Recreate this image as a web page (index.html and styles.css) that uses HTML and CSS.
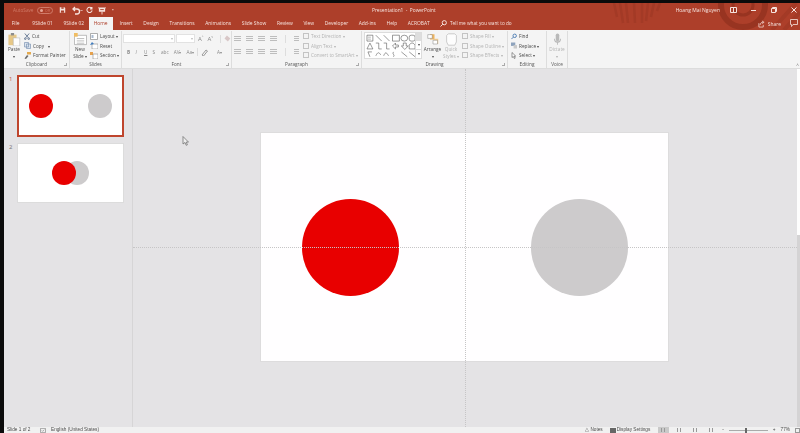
FILE: index.html
```html
<!DOCTYPE html>
<html lang="en">
<head>
    <meta charset="UTF-8">
    <title>Presentation1 - PowerPoint</title>
    <link rel="stylesheet" href="styles.css">
</head>
<body>
    <div class="app">
        <div class="chrome">
            <svg class="pattern" width="200" height="27" viewBox="0 0 200 27" fill="none" stroke="#a33a26">
                <path d="M14 0l3 14M20 0l3 20M26 0l2 20M34 0l1 20M42 0v20M48 0l-2 18M54 0l-3 14M60 0l-3 8" stroke-width="2.5"/>
                <circle cx="143" cy="2" r="22" stroke="#983421" stroke-width="6"/>
                <circle cx="143" cy="2" r="10" stroke="#983421" stroke-width="3"/>
                <path d="M172 27l24-27M184 27l16-18" stroke-width="4"/>
            </svg>

            <div class="titlebar">
                <div class="qat">
                    <span class="autosave">AutoSave</span>
                    <span class="toggle"><i></i>Off</span>
                    <svg class="qat-save" width="7" height="8" viewBox="0 0 9 9"><path d="M1 1h6l1 1v6H1z" fill="#f6e3de"/><path d="M3 1h3v2H3zM2.5 5h4v3h-4z" fill="#a93f2a"/></svg>
                    <svg class="qat-undo" width="11" height="9" viewBox="0 0 11 9" fill="none" stroke="#f6e3de" stroke-width="1.3"><path d="M3 1L1 3l2 2M1 3h4a2.5 2.5 0 0 1 0 5H3"/><path d="M8.5 4l1 1 1-1" stroke-width=".8"/></svg>
                    <svg class="qat-redo" width="7" height="8" viewBox="0 0 8 8" fill="none" stroke="#f6e3de" stroke-width="1.2"><path d="M6.5 2.200A3 3 0 1 0 7 4.500M6.800.5v2.200H4.600"/></svg>
                    <svg class="qat-slide" width="8" height="9" viewBox="0 0 9 9"><path d="M0 1h9v1H0zM1 2h7v4H1z" fill="#f6e3de"/><path d="M4 6h1v3H4z" fill="#f6e3de"/><path d="M2.5 3h4v1h-4z" fill="#a93f2a"/></svg>
                    <span class="qat-more">&#8226;</span>
                </div>
                <div class="doc-title">Presentation1 &nbsp;-&nbsp; PowerPoint</div>
                <div class="window-controls">
                    <span class="user">Hoang Mai Nguyen</span>
                    <svg width="7" height="6" viewBox="0 0 7 6" fill="none" stroke="#f6e3de"><path d="M.5.5h6v5h-6zM3.5.5v5"/></svg>
                    <span class="ctl-min"></span>
                    <svg width="6" height="6" viewBox="0 0 6 6" fill="none" stroke="#f6e3de"><path d="M.5 1.500h4v4h-4zM1.500 1.500v-1h4v4h-1"/></svg>
                    <svg width="6" height="6" viewBox="0 0 6 6" fill="none" stroke="#f6e3de"><path d="M.5.5l5 5M5.500.5l-5 5"/></svg>
                </div>
            </div>

            <div class="tabbar">
                <nav class="tabs">
                    <span class="tab tab-file">File</span>
                    <span class="tab">9Slide 01</span>
                    <span class="tab tab-slide2">9Slide 02</span>
                    <span class="tab tab-active">Home</span>
                    <span class="tab tab-insert">Insert</span>
                    <span class="tab">Design</span>
                    <span class="tab">Transitions</span>
                    <span class="tab">Animations</span>
                    <span class="tab">Slide Show</span>
                    <span class="tab">Review</span>
                    <span class="tab">View</span>
                    <span class="tab">Developer</span>
                    <span class="tab">Add-ins</span>
                    <span class="tab">Help</span>
                    <span class="tab">ACROBAT</span>
                </nav>
                <svg class="search-icon" width="7" height="7" viewBox="0 0 7 7" fill="none" stroke="#f6e3de"><circle cx="4.3" cy="2.7" r="2.1"/><path d="M2.800 4.200L.5 6.500"/></svg>
                <span class="tell-me">Tell me what you want to do</span>
                <div class="share">
                    <svg width="7" height="8" viewBox="0 0 8 8" fill="none" stroke="#f6e3de" stroke-width=".8"><path d="M1 3v4.500h5V5M2.500 5c0-2 1.500-3 3-3M4.500.5l2.500 1.500-2.500 1.500"/></svg>
                    <span>Share</span>
                </div>
                <svg class="comment" width="8" height="8" viewBox="0 0 8 8" fill="none" stroke="#f6e3de" stroke-width=".8"><path d="M.5.5h7v5H3L1.500 7.500v-2h-1z"/></svg>
            </div>
        </div>

        <div class="ribbon">
            <section class="group group-clipboard">
                <div class="group-body">
                    <div class="big-btn paste-btn">
                        <svg width="13" height="13" viewBox="0 0 15 16"><path d="M0 2h10v13H0z" fill="#e7c887"/><path d="M3 0h4v3H3z" fill="#8d8d8d"/><path d="M6 6h8v10H6z" fill="#fdfdfd" stroke="#a9a9a9" stroke-width=".6"/></svg>
                        <span>Paste</span>
                        <span class="caret">&#9662;</span>
                    </div>
                    <div class="small-col">
                        <div class="small-btn">
                            <svg width="6" height="7" viewBox="0 0 7 7" fill="none" stroke="#5b6f8c"><path d="M1 0l4 5M6 0L2 5"/><circle cx="1.5" cy="6" r="1"/><circle cx="5.5" cy="6" r="1"/></svg>
                            <span>Cut</span>
                        </div>
                        <div class="small-btn">
                            <svg width="7" height="7" viewBox="0 0 7 7" fill="#dbe4ef" stroke="#7f96b5" stroke-width=".7"><path d="M.5.5h4v4.500h-4zM2.500 2h4v4.500h-4z"/></svg>
                            <span>Copy &nbsp; <i class="drop">&#9662;</i></span>
                        </div>
                        <div class="small-btn">
                            <svg width="7" height="7" viewBox="0 0 7 7"><path d="M3 0h4v2.500H3z" fill="#e3a94e"/><path d="M3 3L.5 6.500 2 7l2.500-3z" fill="#6b6b6b"/></svg>
                            <span>Format Painter</span>
                        </div>
                    </div>
                </div>
                <div class="group-label">Clipboard<i class="launcher"></i></div>
            </section>

            <section class="group group-slides">
                <div class="group-body">
                    <div class="big-btn new-slide">
                        <svg width="13" height="13" viewBox="0 0 14 14"><path d="M.5 2.500h13v10h-13z" fill="#fff" stroke="#9b9b9b" stroke-width=".7"/><path d="M3 6h8M3 8.500h8M3 11h8" stroke="#b9b9b9"/><path d="M0 0h4v4H0z" fill="#f0bd63"/></svg>
                        <span>New</span>
                        <span>Slide <i class="drop">&#9662;</i></span>
                    </div>
                    <div class="small-col">
                        <div class="small-btn">
                            <svg width="8" height="7" viewBox="0 0 8 7"><path d="M.5.5h7v6h-7z" fill="#fff" stroke="#8c8c8c" stroke-width=".7"/><path d="M1.500 2h2v3h-2z" fill="#a9b9cd"/></svg>
                            <span>Layout <i class="drop">&#9662;</i></span>
                        </div>
                        <div class="small-btn">
                            <svg width="8" height="7" viewBox="0 0 8 7"><path d="M2 2h6v5H2z" fill="#fff" stroke="#8c8c8c" stroke-width=".6"/><path d="M0 3l2-3 2 2z" fill="#3f7cbf"/></svg>
                            <span>Reset</span>
                        </div>
                        <div class="small-btn">
                            <svg width="8" height="7" viewBox="0 0 8 7"><path d="M0 0h3v3H0z" fill="#e6a14c"/><path d="M3 2h5v5H3z" fill="#fff" stroke="#8c8c8c" stroke-width=".6"/></svg>
                            <span>Section <i class="drop">&#9662;</i></span>
                        </div>
                    </div>
                </div>
                <div class="group-label">Slides</div>
            </section>

            <section class="group group-font">
                <div class="group-body font-rows">
                    <div class="font-row">
                        <span class="field field-name"><i class="drop">&#9662;</i></span>
                        <span class="field field-size"><i class="drop">&#9662;</i></span>
                        <span class="glyph glyph-wide">A<sup>^</sup></span>
                        <span class="glyph glyph-wide">A<sup>v</sup></span>
                        <span class="sep"></span>
                        <svg width="7" height="7" viewBox="0 0 7 7"><path d="M3 .5l3.500 3-2.500 3-3.500-3z" fill="#d8c7c7"/></svg>
                    </div>
                    <div class="font-row font-row-tools">
                        <b class="glyph">B</b>
                        <i class="glyph glyph-italic">I</i>
                        <u class="glyph">U</u>
                        <span class="glyph">S</span>
                        <span class="glyph">abc</span>
                        <span class="glyph">AV<i class="drop">&#9662;</i></span>
                        <span class="glyph">Aa<i class="drop">&#9662;</i></span>
                        <span class="sep sep-tools"></span>
                        <svg width="8" height="7" viewBox="0 0 8 7" fill="none" stroke="#999"><path d="M1 6l4-5 1.500 1-4 5z"/></svg>
                        <span class="glyph font-color">A<i class="drop">&#9662;</i></span>
                    </div>
                </div>
                <div class="group-label">Font<i class="launcher"></i></div>
            </section>

            <section class="group group-paragraph">
                <div class="group-body para-body">
                    <div class="para-icons">
                        <div class="para-row">
                            <span class="lines"></span><span class="lines"></span><span class="lines"></span><span class="lines"></span><span class="sep"></span><span class="lines lines-narrow"></span>
                        </div>
                        <div class="para-row">
                            <span class="lines"></span><span class="lines"></span><span class="lines"></span><span class="lines"></span><span class="sep"></span><span class="lines lines-narrow"></span>
                        </div>
                    </div>
                    <div class="small-col muted">
                        <div class="small-btn"><i class="box-icon"></i><span>Text Direction <i class="drop">&#9662;</i></span></div>
                        <div class="small-btn"><i class="box-icon"></i><span>Align Text <i class="drop">&#9662;</i></span></div>
                        <div class="small-btn"><i class="box-icon"></i><span>Convert to SmartArt <i class="drop">&#9662;</i></span></div>
                    </div>
                </div>
                <div class="group-label">Paragraph<i class="launcher"></i></div>
            </section>

            <section class="group group-drawing">
                <div class="group-body">
                    <div class="gallery">
                        <svg class="gallery-shapes" width="50" height="24" viewBox="0 0 50 24" fill="none" stroke="#555" stroke-width=".6">
                            <path d="M1 1h6v6H1z"/><path d="M2 3h3M2 5h3" stroke-width=".4"/>
                            <path d="M10 1l6 6M18 1l6 6"/><path d="M27 1h7v6h-7z"/>
                            <ellipse cx="39" cy="4" rx="3.5" ry="3"/><rect x="44" y="1" width="6" height="6" rx="2"/>
                            <path d="M1 15l3-6 3 6zM10 9h3v6h3M18 9h3v6h3M27 12l3-3v2h3v2h-3v2zM36 12h2V9h3v3h2l-3.500 3.500zM44 15v-4l2-2h2l2 2v4z"/>
                            <path d="M2 18l2 5M2 18h4M10 22c2-4 3-4 5-1M18 22c2-5 3-3 5 0M28 18c-2 2 2 3 0 5M36 18l6 5M44 18l6 5"/>
                        </svg>
                        <div class="gallery-arrows">
                            <span class="arrow-off"></span>
                            <span>&#9662;</span>
                            <span class="arrow-more">&#9662;</span>
                        </div>
                    </div>
                    <div class="big-btn arrange">
                        <svg width="12" height="13" viewBox="0 0 16 16"><path d="M4 1h6v7H4z" fill="#efb45c"/><path d="M9 7h6v7H9z" fill="#f5cf92"/><path d="M1 1.500h6v5H1zM8 9h6v5H8z" fill="#fff" stroke="#777" stroke-width=".6"/></svg>
                        <span>Arrange</span>
                        <span class="caret">&#9662;</span>
                    </div>
                    <div class="big-btn quick-styles muted">
                        <svg width="13" height="13" viewBox="0 0 14 16" fill="#fdfdfd" stroke="#c2c2c2"><path d="M3 1h8l2 2v8l-2 4H3l-2-4V3z"/></svg>
                        <span>Quick</span>
                        <span>Styles <i class="drop">&#9662;</i></span>
                    </div>
                    <div class="small-col muted">
                        <div class="small-btn"><i class="box-icon"></i><span>Shape Fill <i class="drop">&#9662;</i></span></div>
                        <div class="small-btn"><i class="box-icon"></i><span>Shape Outline <i class="drop">&#9662;</i></span></div>
                        <div class="small-btn"><i class="box-icon"></i><span>Shape Effects <i class="drop">&#9662;</i></span></div>
                    </div>
                </div>
                <div class="group-label">Drawing<i class="launcher"></i></div>
            </section>

            <section class="group group-editing">
                <div class="group-body">
                    <div class="small-col">
                        <div class="small-btn">
                            <svg width="6" height="7" viewBox="0 0 7 7" fill="none" stroke="#3f73ad"><circle cx="4.3" cy="2.7" r="2"/><path d="M2.800 4.200L.5 6.500"/></svg>
                            <span>Find</span>
                        </div>
                        <div class="small-btn">
                            <svg width="6" height="7" viewBox="0 0 7 7"><path d="M0 0h5v4H0z" fill="#8ea3bd"/><path d="M3 3h4v4H3z" fill="#c9c9c9"/></svg>
                            <span>Replace <i class="drop">&#9662;</i></span>
                        </div>
                        <div class="small-btn">
                            <svg width="6" height="7" viewBox="0 0 6 7" fill="#fff" stroke="#555" stroke-width=".6"><path d="M1 .5v5l1.300-1 1 2 .9-.4-1-2h1.500z"/></svg>
                            <span>Select <i class="drop">&#9662;</i></span>
                        </div>
                    </div>
                </div>
                <div class="group-label">Editing</div>
            </section>

            <section class="group group-voice">
                <div class="group-body">
                    <div class="big-btn dictate muted">
                        <svg width="7" height="13" viewBox="0 0 8 14" fill="#b9b9b9"><rect x="2" y="0" width="4" height="9" rx="2"/><path d="M0 6h1c0 4 6 4 6 0h1c0 3-1.500 4.500-3.500 4.700V13h-1v-2.300C1.500 10.500 0 9 0 6z"/></svg>
                        <span>Dictate</span>
                        <span class="caret">&#9662;</span>
                    </div>
                </div>
                <div class="group-label">Voice</div>
            </section>

            <span class="collapse">^</span>
        </div>

        <div class="workspace">
            <aside class="thumbs">
                <div class="thumb-row">
                    <span class="thumb-num thumb-num-active">1</span>
                    <div class="thumb thumb-active">
                        <span class="dot dot-red t1-red"></span>
                        <span class="dot dot-gray t1-gray"></span>
                    </div>
                </div>
                <div class="thumb-row">
                    <span class="thumb-num">2</span>
                    <div class="thumb">
                        <span class="dot dot-gray t2-gray"></span>
                        <span class="dot dot-red t2-red"></span>
                    </div>
                </div>
            </aside>

            <main class="stage">
                <div class="slide">
                    <span class="circle circle-red"></span>
                    <span class="circle circle-gray"></span>
                </div>
                <span class="guide-v"></span>
                <span class="guide-h"></span>
                <svg class="cursor" width="7" height="10" viewBox="0 0 7 10" fill="#eee" stroke="#666" stroke-width=".7"><path d="M1 .5v7.500l2-1.500 1.200 2.800 1.200-.5-1.200-2.700h2.300z"/></svg>
                <div class="scrollbar"><span class="scroll-thumb"></span></div>
            </main>
        </div>

        <footer class="status">
            <span class="status-slide">Slide 1 of 2</span>
            <svg class="status-check" width="6" height="5" viewBox="0 0 7 6" fill="none" stroke="#777" stroke-width=".7"><path d="M.5.5h6v5h-6zM2 3l1 1 2-2"/></svg>
            <span class="status-lang">English (United States)</span>
            <div class="status-right">
                <span class="notes">&#9651; Notes</span>
                <span class="display-settings"><i class="display-icon"></i>Display Settings</span>
                <span class="view view-active"></span>
                <span class="view"></span>
                <span class="view"></span>
                <span class="view"></span>
                <span>-</span>
                <span class="zoom-track"><i></i></span>
                <span>+</span>
                <span>77%</span>
                <i class="fit"></i>
            </div>
        </footer>
    </div>
</body>
</html>
```

FILE: styles.css
```css
:root {
    --accent: #ad3f2a;
    --tab-text: #f6e3de;
    --ribbon: #f4f4f4;
    --stage: #e4e3e5;
    --rule: #d6d5d6;
    --ink: #4a4a4a;
    --muted: #b3b3b3;
}

* {
    box-sizing: border-box;
    margin: 0;
    padding: 0;
}

html, body {
    height: 100%;
    overflow: hidden;
}

body {
    background-color: #0b0b0b;
    font-family: "Open Sans", "Liberation Sans", sans-serif;
    font-size: 4.7px;
    color: var(--ink);
}

i {
    font-style: normal;
}

.app {
    height: 433px;
    margin-left: 4px;
    padding-top: 3px;
    display: flex;
    flex-direction: column;
}

/* title bar and tabs */

.chrome {
    position: relative;
    height: 27px;
    flex-shrink: 0;
    background-color: var(--accent);
    color: var(--tab-text);
    overflow: hidden;
    filter: blur(.35px);
}

.pattern {
    position: absolute;
    top: 0;
    right: 0;
}

.titlebar {
    position: relative;
    height: 14px;
    display: flex;
    align-items: center;
    justify-content: space-between;
}

.qat {
    width: 340px;
    padding-left: 9px;
    display: flex;
    align-items: center;
}

.autosave {
    width: 24px;
    color: #d07a68;
}

.toggle {
    width: 16px;
    height: 7px;
    border: 1px solid #d07a68;
    border-radius: 4px;
    padding-left: 2px;
    display: flex;
    align-items: center;
    gap: 2px;
    font-size: 3.5px;
    color: #d07a68;
}

.toggle i {
    width: 3px;
    height: 3px;
    border-radius: 50%;
    background-color: #e6a698;
}

.qat-save {
    margin-left: 6px;
}

.qat-undo {
    margin-left: 6px;
}

.qat-redo {
    margin-left: 3px;
}

.qat-slide {
    margin-left: 5px;
}

.qat-more {
    margin-left: 6px;
}

.doc-title {
    position: absolute;
    left: 368px;
    font-size: 4.8px;
}

.window-controls {
    display: flex;
    align-items: center;
    padding-right: 3px;
}

.user {
    margin-right: 10px;
    font-size: 5px;
}

.window-controls svg {
    margin-right: 14px;
}

.window-controls svg:last-child {
    margin-right: 0;
}

.ctl-min {
    width: 5px;
    height: 1px;
    background-color: var(--tab-text);
    margin-right: 15px;
}

.tabbar {
    position: relative;
    height: 13px;
    display: flex;
    align-items: flex-end;
}

.tabs {
    display: flex;
    align-items: flex-end;
    padding-left: 2.5px;
}

.tab {
    height: 13px;
    line-height: 12px;
    font-size: 4.9px;
    padding: 0 5.3px;
    white-space: nowrap;
}

.tab-file {
    padding-right: 7.5px;
}

.tab-slide2 {
    padding-right: 4.5px;
}

.tab-active {
    background-color: var(--ribbon);
    color: var(--accent);
    width: 24px;
    padding: 0;
    text-align: center;
}

.tab-insert {
    padding-left: 7px;
}

.search-icon {
    margin-left: 5px;
    margin-bottom: 3px;
}

.tell-me {
    margin-left: 3px;
    line-height: 12px;
    height: 13px;
    font-size: 4.7px;
}

.share {
    margin-left: auto;
    height: 13px;
    display: flex;
    align-items: center;
    gap: 3px;
    font-size: 4.9px;
}

.comment {
    margin: 0 2px 3px 9px;
}

/* ribbon */

.ribbon {
    position: relative;
    height: 39px;
    flex-shrink: 0;
    background-color: var(--ribbon);
    border-bottom: 1px solid #dcdcdc;
    display: flex;
    filter: blur(.35px);
}

.group {
    height: 37px;
    margin-top: 1px;
    border-right: 1px solid #dddddd;
    display: flex;
    flex-direction: column;
    white-space: nowrap;
}

.group-clipboard { width: 66px; }
.group-slides { width: 52px; }
.group-font { width: 110px; }
.group-paragraph { width: 130px; }
.group-drawing { width: 146px; }
.group-editing { width: 39px; }
.group-voice { width: 21px; }

.group-body {
    height: 30px;
    flex-shrink: 0;
    display: flex;
    padding-left: 2px;
}

.group-label {
    position: relative;
    height: 7px;
    line-height: 7px;
    text-align: center;
    color: #555;
}

.launcher {
    position: absolute;
    right: 2px;
    top: 2px;
    width: 3px;
    height: 3px;
    border-right: 1px solid #aaa;
    border-bottom: 1px solid #aaa;
}

.drop {
    font-size: 3.5px;
}

.big-btn {
    display: flex;
    flex-direction: column;
    align-items: center;
    padding-top: 2px;
    line-height: 7px;
}

.caret {
    font-size: 3.5px;
}

.paste-btn {
    width: 16px;
}

.small-col {
    display: flex;
    flex-direction: column;
    gap: 2.5px;
    padding-top: 1.5px;
    margin-left: 2px;
}

.small-btn {
    height: 7px;
    display: flex;
    align-items: center;
    gap: 2px;
}

.muted {
    color: var(--muted);
}

.box-icon {
    width: 6px;
    height: 6px;
    border: 1px solid #c4c4c4;
}

.new-slide {
    width: 16px;
}

.font-rows {
    padding: 3px 0 0 1px;
    flex-direction: column;
    gap: 4.5px;
}

.font-row {
    height: 9px;
    display: flex;
    align-items: center;
}

.font-row-tools {
    gap: 5px;
    padding-left: 4px;
    color: #777;
}

.field {
    height: 9px;
    background-color: #fff;
    border: 1px solid #e2e2e2;
    display: flex;
    align-items: center;
    justify-content: flex-end;
    padding-right: 1px;
    color: #bbb;
}

.field-name {
    width: 54px;
    margin-right: 1px;
}

.field-size {
    width: 19px;
    margin-right: 3px;
}

.glyph {
    min-width: 3.5px;
    color: #888;
}

.glyph-italic {
    font-style: italic;
}

.glyph-wide {
    width: 10px;
    font-size: 6px;
}

.glyph-wide sup {
    font-size: 3px;
}

.font-color {
    margin-left: 3px;
}

.sep {
    width: 1px;
    height: 8px;
    margin: 0 3px;
    background-color: #dddddd;
}

.sep-tools {
    margin: 0 -2px;
}

.para-icons {
    width: 67px;
    padding-top: 3px;
    display: flex;
    flex-direction: column;
    gap: 4.5px;
}

.para-row {
    height: 9px;
    display: flex;
    align-items: center;
    gap: 5px;
}

.lines {
    width: 7px;
    height: 6px;
    background-image: repeating-linear-gradient(#bdbdbd 0 1px, transparent 1px 2px);
}

.lines-narrow {
    width: 5px;
}

.gallery {
    width: 58px;
    height: 27px;
    margin-top: 1px;
    background-color: #fff;
    border: 1px solid #dcdcdc;
    display: flex;
    justify-content: space-between;
}

.gallery-shapes {
    margin: 1px 0 0 1px;
}

.gallery-arrows {
    width: 6px;
    display: flex;
    flex-direction: column;
    border-left: 1px solid #dcdcdc;
    font-size: 3.5px;
    text-align: center;
    line-height: 8px;
}

.gallery-arrows span {
    flex: 1;
}

.arrow-off {
    background-color: #dedede;
}

.arrow-more {
    border-top: 1px solid #dcdcdc;
}

.arrange {
    width: 19px;
    margin-left: 1px;
}

.quick-styles {
    width: 18px;
}

.group-editing .group-body {
    padding-left: 3px;
}

.group-editing .small-col {
    margin-left: 0;
}

.group-voice .group-body {
    padding-left: 1px;
}

.dictate {
    width: 18px;
}

.collapse {
    position: absolute;
    right: 1px;
    bottom: 0;
    color: #777;
}

/* thumbnails and slide */

.workspace {
    flex: 1;
    display: flex;
    min-height: 0;
}

.thumbs {
    width: 129px;
    flex-shrink: 0;
    background-color: var(--stage);
    border-right: 1px solid var(--rule);
    padding-top: 6px;
    display: flex;
    flex-direction: column;
    gap: 6px;
}

.thumb-row {
    display: flex;
}

.thumb-num {
    width: 13px;
    padding-left: 5px;
    font-size: 6px;
    color: #777;
}

.thumb-num-active {
    color: #c2563f;
}

.thumb {
    position: relative;
    width: 107px;
    height: 60px;
    background-color: #fff;
    border: 1px solid #dcdcdc;
}

.thumb-active {
    height: 62px;
    border: 2px solid #bf452d;
}

.dot {
    position: absolute;
    width: 24px;
    height: 24px;
    border-radius: 50%;
}

.dot-red {
    background-color: #e80000;
}

.dot-gray {
    background-color: #cdcbcc;
}

.t1-red {
    left: 10px;
    top: 17px;
}

.t1-gray {
    left: 68.5px;
    top: 17px;
}

.t2-red {
    left: 34px;
    top: 17px;
}

.t2-gray {
    left: 46.5px;
    top: 17px;
}

.stage {
    position: relative;
    flex: 1;
    background-color: var(--stage);
    display: flex;
    align-items: flex-start;
}

.slide {
    position: relative;
    width: 407px;
    height: 228px;
    margin: 64px 0 0 128px;
    background-color: #fffeff;
    outline: 1px solid #dddcdd;
}

.circle {
    position: absolute;
    top: 66px;
    width: 96.5px;
    height: 96.5px;
    border-radius: 50%;
}

.circle-red {
    left: 41px;
    background-color: #e80000;
}

.circle-gray {
    left: 270px;
    background-color: #cdcbcc;
}

.guide-v {
    position: absolute;
    left: 331.5px;
    top: 0;
    bottom: 0;
    border-left: 1px dotted #c6c5c6;
}

.guide-h {
    position: absolute;
    left: 0;
    right: 3px;
    top: 178px;
    border-top: 1px dotted #c6c5c6;
}

.cursor {
    position: absolute;
    left: 49px;
    top: 67px;
}

.scrollbar {
    position: absolute;
    right: 0;
    top: 0;
    bottom: 0;
    width: 3px;
    background-color: #d4d3d4;
}

.scroll-thumb {
    display: block;
    height: 166px;
    background-color: #fdfdfd;
}

/* status bar */

.status {
    height: 6px;
    flex-shrink: 0;
    background-color: #f1f1f1;
    display: flex;
    align-items: center;
    font-family: "Liberation Sans", sans-serif;
    font-size: 4.7px;
    line-height: 6px;
    overflow: hidden;
    filter: blur(.3px);
}

.status-slide {
    margin-left: 3px;
    width: 33px;
}

.status-check {
    flex-shrink: 0;
}

.status-lang {
    margin-left: 5px;
}

.status-right {
    margin-left: auto;
    display: flex;
    align-items: center;
    gap: 5px;
}

.notes {
    margin-right: 2px;
}

.display-settings {
    display: flex;
    align-items: center;
    gap: 1px;
    margin-right: 3px;
}

.display-icon {
    width: 6px;
    height: 5px;
    background-color: #666;
}

.view {
    width: 11px;
    height: 6px;
    background-image: repeating-linear-gradient(90deg, #999 0 1px, transparent 1px 3px);
    background-size: 6px 4px;
    background-position: center;
    background-repeat: no-repeat;
}

.view-active {
    background-color: #c9c9c9;
}

.zoom-track {
    position: relative;
    width: 39px;
    height: 1px;
    background-color: #aaa;
}

.zoom-track i {
    position: absolute;
    left: 16px;
    top: -2px;
    width: 2px;
    height: 5px;
    background-color: #666;
}

.fit {
    width: 5px;
    height: 5px;
    border: 1px solid #999;
}
```
